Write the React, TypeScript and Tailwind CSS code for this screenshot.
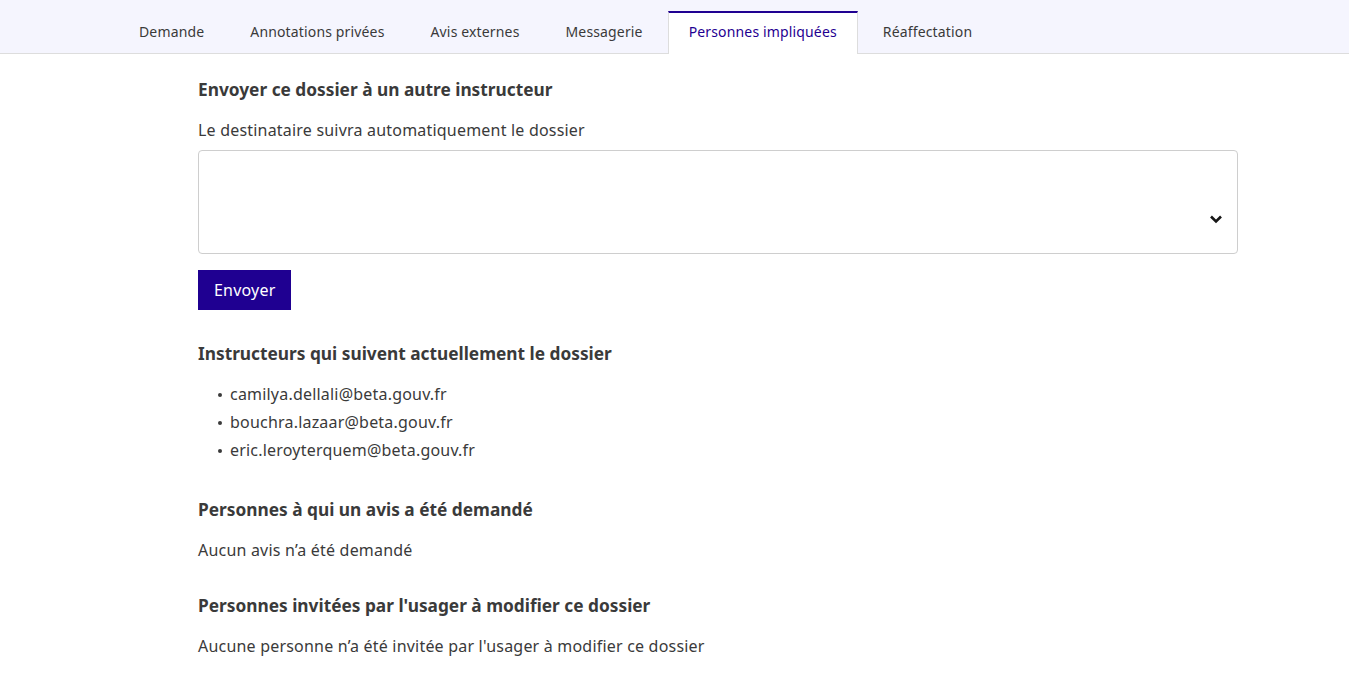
import React from "react";

const tabs = [
  "Demande",
  "Annotations privées",
  "Avis externes",
  "Messagerie",
  "Personnes impliquées",
  "Réaffectation",
];

const emails = [
  "camilya.dellali@beta.gouv.fr",
  "bouchra.lazaar@beta.gouv.fr",
  "eric.leroyterquem@beta.gouv.fr",
];

export default function App() {
  return (
    <div
      className="min-h-screen bg-white text-[#3a3a3a]"
      style={{ fontFamily: '"Noto Sans", "Open Sans", sans-serif' }}
    >
      <div className="h-[54px] bg-[#f5f5fe] border-b border-[#dddddd] flex items-end pl-[118px] gap-1">
        {tabs.map((t) => {
          const active = t === "Personnes impliquées";
          return active ? (
            <div
              key={t}
              className="h-[43px] -mb-px bg-white border-x border-[#dddddd] border-t-2 border-t-[#1f0091] px-5 pb-[5px] flex items-center text-[14px] tracking-[0.15px] text-[#1f0091]"
            >
              {t}
            </div>
          ) : (
            <div
              key={t}
              className="h-[42px] px-5 pb-[2px] border-x border-transparent flex items-center text-[14px] tracking-[0.15px] text-[#3a3a3a]"
            >
              {t}
            </div>
          );
        })}
      </div>

      <div className="pl-[198px] w-[1238px] pt-[24px]">
        <h2 className="text-[17.3px] font-bold leading-6">
          Envoyer ce dossier à un autre instructeur
        </h2>
        <p className="mt-4 text-[16px] leading-6 tracking-[0.2px]">
          Le destinataire suivra automatiquement le dossier
        </p>
        <div className="mt-2 h-[104px] border border-[#cecece] rounded-[4px] flex items-center justify-end pr-[14px] pt-[34px]">
          <svg width="14" height="10" viewBox="0 0 14 10">
            <path
              d="M2 2.5 L7 7.5 L12 2.5"
              fill="none"
              stroke="#161616"
              strokeWidth="2.6"
            />
          </svg>
        </div>
        <button className="mt-4 h-10 px-4 bg-[#1f0091] text-white text-[16px] tracking-[0.2px]">
          Envoyer
        </button>

        <h2 className="mt-8 text-[17.3px] font-bold leading-6">
          Instructeurs qui suivent actuellement le dossier
        </h2>
        <ul className="mt-[14px] text-[16px] leading-7 tracking-[0.2px]">
          {emails.map((e) => (
            <li key={e} className="flex items-center">
              <span className="ml-[20px] mr-[8px] w-[4px] h-[4px] rounded-full bg-[#3a3a3a] mt-[2px]" />
              <span>{e}</span>
            </li>
          ))}
        </ul>

        <h2 className="mt-[34px] text-[17.3px] font-bold leading-6">
          Personnes à qui un avis a été demandé
        </h2>
        <p className="mt-4 text-[16px] leading-6 tracking-[0.2px]">
          Aucun avis n’a été demandé
        </p>

        <h2 className="mt-8 text-[17.3px] font-bold leading-6">
          Personnes invitées par l'usager à modifier ce dossier
        </h2>
        <p className="mt-4 text-[16px] leading-6 tracking-[0.2px]">
          Aucune personne n’a été invitée par l'usager à modifier ce dossier
        </p>
      </div>
    </div>
  );
}
